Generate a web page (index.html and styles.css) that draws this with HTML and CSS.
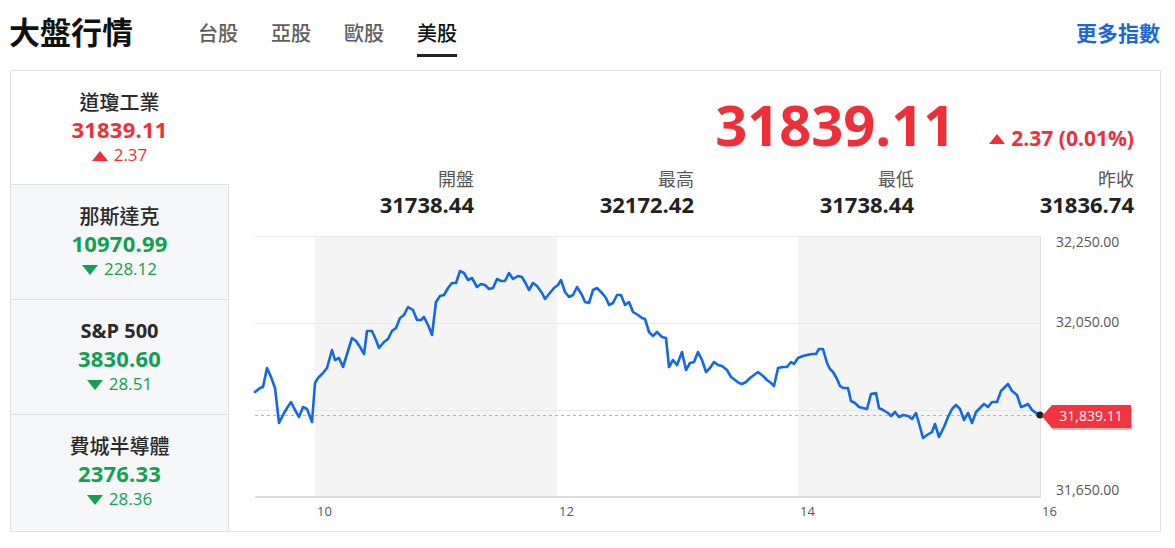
FILE: index.html
```html
<!DOCTYPE html>
<html lang="zh-Hant">
<head>
<meta charset="utf-8">
<title>大盤行情</title>
<link rel="stylesheet" href="styles.css">
</head>
<body>
<header class="top">
  <h1 class="title">大盤行情</h1>
  <nav class="tabs">
    <a class="tab">台股</a>
    <a class="tab">亞股</a>
    <a class="tab">歐股</a>
    <a class="tab active">美股</a>
  </nav>
  <a class="more">更多指數</a>
</header>
<section class="card">
  <aside class="side">
    <div class="item item-1 active">
      <div class="name">道瓊工業</div>
      <div class="val up">31839.11</div>
      <div class="chg up"><span class="tri tri-up"></span>2.37</div>
    </div>
    <div class="item item-2">
      <div class="name">那斯達克</div>
      <div class="val down">10970.99</div>
      <div class="chg down"><span class="tri tri-down"></span>228.12</div>
    </div>
    <div class="item item-3">
      <div class="name latin">S&amp;P 500</div>
      <div class="val down">3830.60</div>
      <div class="chg down"><span class="tri tri-down"></span>28.51</div>
    </div>
    <div class="item item-4">
      <div class="name">費城半導體</div>
      <div class="val down">2376.33</div>
      <div class="chg down"><span class="tri tri-down"></span>28.36</div>
    </div>
  </aside>
  <div class="main">
    <div class="quote">
      <span class="price up">31839.11</span>
      <span class="change up"><span class="tri tri-up big"></span>2.37 (0.01%)</span>
    </div>
    <div class="stats">
      <div class="stat"><div class="label">開盤</div><div class="num">31738.44</div></div>
      <div class="stat"><div class="label">最高</div><div class="num">32172.42</div></div>
      <div class="stat"><div class="label">最低</div><div class="num">31738.44</div></div>
      <div class="stat"><div class="label">昨收</div><div class="num">31836.74</div></div>
    </div>
    <svg class="chart" width="931" height="302" viewBox="229 228 931 302" xmlns="http://www.w3.org/2000/svg">
      <rect x="315" y="236" width="242" height="261" fill="#f4f4f4"/>
      <rect x="798" y="236" width="242" height="261" fill="#f4f4f4"/>
      <line x1="255" y1="236.5" x2="1040" y2="236.5" stroke="#e8e8e8"/>
      <line x1="255" y1="323.5" x2="1040" y2="323.5" stroke="#e8e8e8"/>
      <line x1="255" y1="410.5" x2="1040" y2="410.5" stroke="#e8e8e8"/>
      <line x1="1040.5" y1="236" x2="1040.5" y2="497" stroke="#e0e0e0"/>
      <line x1="255" y1="497" x2="1041" y2="497" stroke="#dcdcdc" stroke-width="2"/>
      <line x1="255" y1="415.5" x2="1040" y2="415.5" stroke="#b4b4b4" stroke-dasharray="3 3"/>
      <polyline fill="none" stroke="#1467e6" stroke-width="2.6" stroke-linejoin="round" stroke-linecap="round"
        points="255,392 260,388 263,387 267,368 271,377 275,388 279,423 283,415 287,408 291,402 295,410 299,417 303,407 307,409 312,422 315,383 318,378 323,373 327,368 332,350 335,360 339,358 343,367 352,338 356,341 360,347 364,354 367,331 372,331 376,340 379,348 384,342 388,339 392,331 396,328 400,318 404,315 408,307 413,310 417,320 421,320 424,317 428,325 432,335 436,302 440,296 444,295 448,288 452,283 456,283 460,271 464,273 468,280 472,278 477,287 481,284 485,285 489,289 493,288 497,279 501,281 505,281 509,273 513,279 518,276 522,277 526,284 529,290 533,283 537,286 542,293 545,299 549,294 554,288 558,285 561,280 565,292 569,297 573,295 577,287 582,295 585,302 589,303 593,290 597,288 602,293 606,298 609,305 613,303 617,295 621,295 625,305 629,302 633,312 638,315 642,318 645,319 649,332 653,336 657,332 662,337 666,338 669,367 673,360 677,365 682,352 686,370 690,363 694,362 698,352 702,360 706,372 710,368 714,362 718,365 722,366 727,370 731,377 735,380 739,383 742,384 746,382 750,378 754,375 758,372 763,376 767,380 771,383 774,386 778,368 783,367 787,367 791,362 794,364 798,358 803,356 807,355 812,354 816,354 819,349 823,349 827,363 830,369 833,372 837,379 840,386 843,388 848,388 851,401 855,403 859,407 863,408 867,409 871,394 876,393 879,408 883,410 888,413 891,416 895,412 899,417 903,415 908,416 912,419 916,413 920,427 923,438 927,435 932,432 935,424 939,437 944,427 948,417 952,409 956,405 960,409 964,420 968,413 972,423 976,412 980,408 984,404 988,407 992,402 997,402 1001,391 1005,387 1008,384 1012,391 1017,395 1021,407 1024,406 1028,404 1032,410 1036,413 1040,415"/>
      <circle cx="1040" cy="415" r="3.5" fill="#1d1d1d"/>
      <text class="axis" x="1056" y="247">32,250.00</text>
      <text class="axis" x="1056" y="327">32,050.00</text>
      <text class="axis" x="1056" y="495">31,650.00</text>
      <polygon points="1043,418 1053,407 1132,407 1132,430 1053,430" fill="#b8242c" opacity="0.35"/>
      <polygon points="1042,416 1052,405 1131,405 1131,428 1052,428" fill="#f2343f"/>
      <text class="tag" x="1091" y="421" text-anchor="middle">31,839.11</text>
      <text class="xlab" x="317" y="516">10</text>
      <text class="xlab" x="559" y="516">12</text>
      <text class="xlab" x="800" y="516">14</text>
      <text class="xlab" x="1042" y="516">16</text>
    </svg>
  </div>
</section>
</body>
</html>
```

FILE: styles.css
```css
* {
  box-sizing: border-box;
  margin: 0;
  padding: 0;
}

body {
  font-family: "Open Sans", "Noto Sans CJK TC", sans-serif;
  background: #ffffff;
  color: #222222;
  width: 1175px;
  height: 548px;
  overflow: hidden;
}

.top {
  display: flex;
  align-items: flex-start;
  height: 70px;
  padding: 0 15px 0 9px;
}

.title {
  font-family: "Noto Sans CJK TC", sans-serif;
  font-size: 31px;
  font-weight: 700;
  line-height: 40px;
  margin-top: 11px;
  color: #111111;
}

.tabs {
  display: flex;
  gap: 33px;
  margin-left: 65px;
}

.tab {
  font-family: "Noto Sans CJK TC", sans-serif;
  font-size: 20px;
  font-weight: 500;
  line-height: 28px;
  padding-top: 19px;
  padding-bottom: 7px;
  border-bottom: 3px solid transparent;
  color: #5e5e5e;
}

.tab.active {
  color: #111111;
  border-bottom-color: #222222;
}

.more {
  margin-left: auto;
  margin-top: 18px;
  font-family: "Noto Sans CJK TC", sans-serif;
  font-size: 21px;
  font-weight: 700;
  line-height: 28px;
  color: #1a68d6;
}

.card {
  margin-left: 10px;
  width: 1151px;
  height: 462px;
  border: 1px solid #e2e2e2;
  display: flex;
}

.side {
  width: 218px;
  flex: none;
  display: flex;
  flex-direction: column;
}

.item {
  background: #f5f7f9;
  border-right: 1px solid #dedede;
  border-top: 1px solid #dedede;
  text-align: center;
  padding-top: 17px;
}

.item-1 { height: 113px; }
.item-2 { height: 115px; }
.item-3 { height: 115px; }
.item-4 { height: 117px; }

.item.active {
  background: #ffffff;
  border-right-color: transparent;
  border-top: none;
}

.name {
  font-family: "Noto Sans CJK TC", sans-serif;
  font-size: 20px;
  font-weight: 500;
  line-height: 28px;
  color: #2a2a2a;
}

.name.latin {
  font-family: "Open Sans", sans-serif;
  font-weight: 700;
}

.val {
  font-size: 22px;
  font-weight: 700;
  line-height: 27px;
  letter-spacing: 0.2px;
}

.chg {
  font-size: 17px;
  line-height: 24px;
}

.up { color: #ee2f3a; }
.down { color: #12a052; }

.tri {
  display: inline-block;
  width: 0;
  height: 0;
  border-left: 8px solid transparent;
  border-right: 8px solid transparent;
  margin-right: 6px;
}

.tri-up { border-bottom: 10px solid currentColor; }
.tri-down { border-top: 10px solid currentColor; }
.tri.big { vertical-align: 2px; }

.main {
  flex: 1;
  display: flex;
  flex-direction: column;
}

.quote {
  display: flex;
  justify-content: flex-end;
  align-items: baseline;
  gap: 34px;
  padding: 23px 26px 0 25px;
  height: 83px;
}

.price {
  font-size: 56px;
  font-weight: 700;
  line-height: 60px;
}

.change {
  font-size: 21px;
  font-weight: 700;
  line-height: 24px;
}

.stats {
  display: grid;
  grid-template-columns: repeat(4, 1fr);
  padding: 0 26px 0 25px;
  margin-top: 13px;
  text-align: right;
}

.label {
  font-family: "Noto Sans CJK TC", sans-serif;
  font-size: 18px;
  line-height: 22px;
  color: #555555;
}

.num {
  font-size: 22px;
  font-weight: 700;
  line-height: 30px;
  color: #222222;
}

.chart {
  display: block;
  margin-top: 9px;
  flex: none;
}

.axis {
  font-family: "Open Sans", sans-serif;
  font-size: 14px;
  fill: #555555;
}

.tag {
  font-family: "Open Sans", sans-serif;
  font-size: 14px;
  fill: #ffffff;
}

.xlab {
  font-family: "Open Sans", sans-serif;
  font-size: 13px;
  fill: #555555;
}
```
